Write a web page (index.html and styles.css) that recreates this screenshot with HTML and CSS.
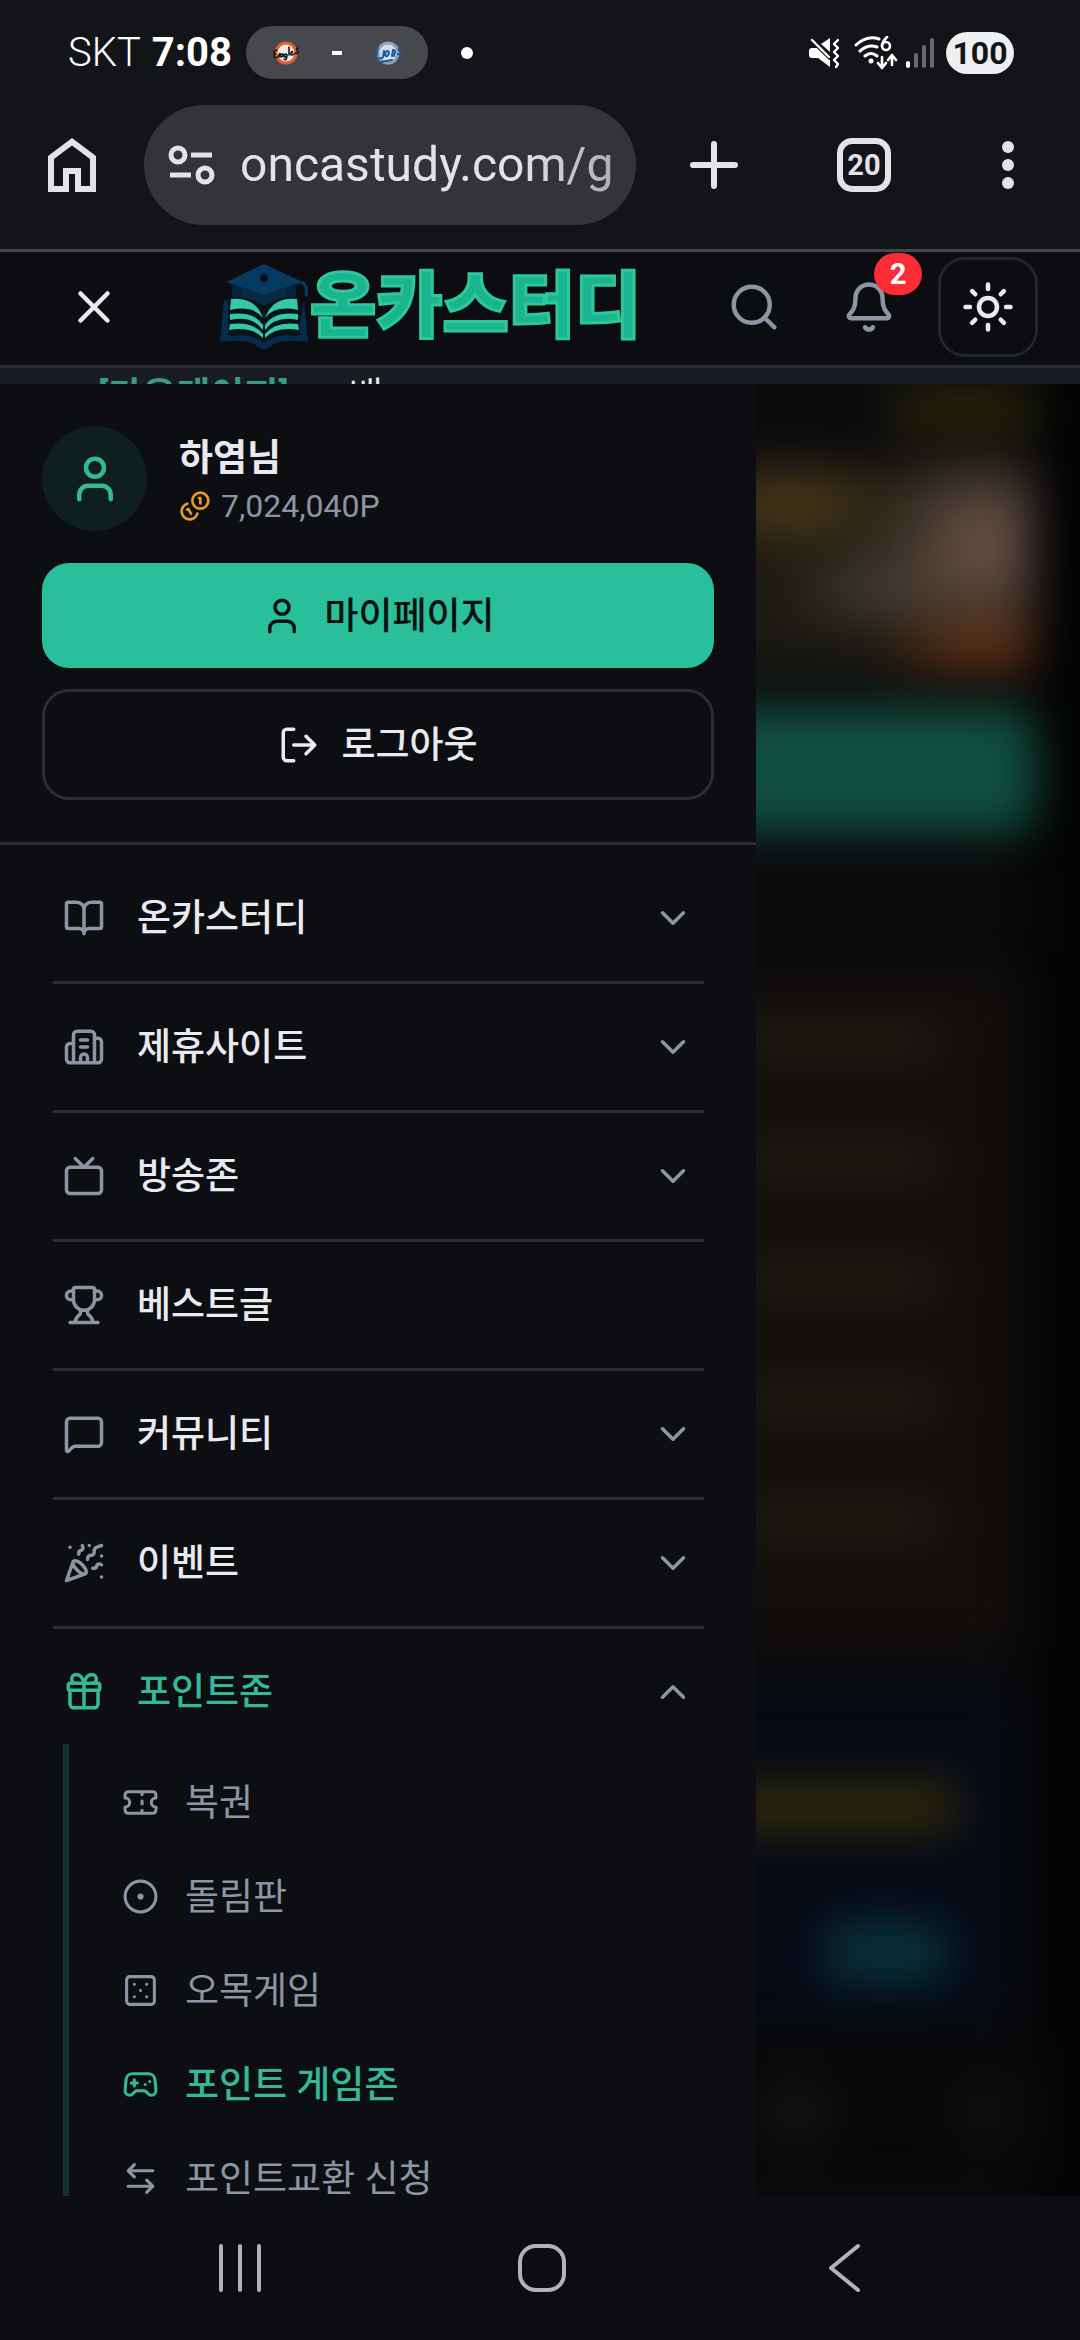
FILE: index.html
```html
<!DOCTYPE html>
<html lang="ko">
<head>
<meta charset="utf-8">
<meta name="viewport" content="width=device-width, initial-scale=1">
<title>온카스터디</title>
<link rel="stylesheet" href="styles.css">
</head>
<body>
<svg class="sprite" aria-hidden="true">
  <symbol id="user" viewBox="0 0 24 24"><path d="M19 21v-2a4 4 0 0 0-4-4H9a4 4 0 0 0-4 4v2"/><circle cx="12" cy="7" r="4"/></symbol>
  <symbol id="close" viewBox="0 0 24 24"><path d="M18 6 6 18M6 6l12 12"/></symbol>
  <symbol id="search" viewBox="0 0 24 24"><path d="m21 21-4.34-4.34"/><circle cx="11" cy="11" r="8"/></symbol>
  <symbol id="bell" viewBox="0 0 24 24"><path d="M10.268 21a2 2 0 0 0 3.464 0M3.262 15.326A1 1 0 0 0 4 17h16a1 1 0 0 0 .74-1.673C19.41 13.956 18 12.499 18 8A6 6 0 0 0 6 8c0 4.499-1.411 5.956-2.738 7.326"/></symbol>
  <symbol id="sun" viewBox="0 0 24 24"><circle cx="12" cy="12" r="4"/><path d="M12 2v2M12 20v2m-7.07-17.07 1.41 1.41m11.32 11.32 1.41 1.41M2 12h2M20 12h2M6.34 17.66l-1.41 1.41M19.07 4.93l-1.41 1.41"/></symbol>
  <symbol id="coins" viewBox="0 0 24 24"><path d="M13.744 17.736a6 6 0 1 1-7.48-7.48M15 6h1v4M6.134 14.768l.866-.5 2 3.464"/><circle cx="16" cy="8" r="6"/></symbol>
  <symbol id="logout" viewBox="0 0 24 24"><path d="m16 17 5-5-5-5M21 12H9M9 21H5a2 2 0 0 1-2-2V5a2 2 0 0 1 2-2h4"/></symbol>
  <symbol id="down" viewBox="0 0 24 24"><path d="m6 9 6 6 6-6"/></symbol>
  <symbol id="up" viewBox="0 0 24 24"><path d="m18 15-6-6-6 6"/></symbol>
  <symbol id="book" viewBox="0 0 24 24"><path d="M12 7v14M3 18a1 1 0 0 1-1-1V4a1 1 0 0 1 1-1h5a4 4 0 0 1 4 4 4 4 0 0 1 4-4h5a1 1 0 0 1 1 1v13a1 1 0 0 1-1 1h-6a3 3 0 0 0-3 3 3 3 0 0 0-3-3z"/></symbol>
  <symbol id="building" viewBox="0 0 24 24"><path d="M10 12h4M10 8h4M14 21v-3a2 2 0 0 0-4 0v3M6 10H4a2 2 0 0 0-2 2v7a2 2 0 0 0 2 2h16a2 2 0 0 0 2-2V9a2 2 0 0 0-2-2h-2M6 21V5a2 2 0 0 1 2-2h8a2 2 0 0 1 2 2v16"/></symbol>
  <symbol id="tv" viewBox="0 0 24 24"><path d="m17 2-5 5-5-5"/><rect width="20" height="15" x="2" y="7" rx="2"/></symbol>
  <symbol id="trophy" viewBox="0 0 24 24"><path d="M10 14.66v1.626a2 2 0 0 1-.976 1.696A5 5 0 0 0 7 21.978M14 14.66v1.626a2 2 0 0 0 .976 1.696A5 5 0 0 1 17 21.978M18 9h1.5a1 1 0 0 0 0-5H18M4 22h16M6 9a6 6 0 0 0 12 0V3a1 1 0 0 0-1-1H7a1 1 0 0 0-1 1zM6 9H4.5a1 1 0 0 1 0-5H6"/></symbol>
  <symbol id="message" viewBox="0 0 24 24"><path d="M22 17a2 2 0 0 1-2 2H6.828a2 2 0 0 0-1.414.586l-2.202 2.202A.71.71 0 0 1 2 21.286V5a2 2 0 0 1 2-2h16a2 2 0 0 1 2 2z"/></symbol>
  <symbol id="party" viewBox="0 0 24 24"><path d="M5.8 11.3 2 22l10.7-3.79M4 3h.01M22 8h.01M15 2h.01M22 20h.01M22 2l-2.24.75a2.9 2.9 0 0 0-1.96 3.12c.1.86-.57 1.63-1.45 1.63h-.38c-.86 0-1.6.6-1.76 1.44L14 10M22 13l-.82-.33c-.86-.34-1.82.2-1.98 1.11-.11.7-.72 1.22-1.43 1.22H17M11 2l.33.82c.34.86-.2 1.82-1.11 1.98C9.52 4.9 9 5.52 9 6.23V7M11 13c1.93 1.93 2.83 4.17 2 5-.83.83-3.07-.07-5-2-1.93-1.93-2.83-4.17-2-5 .83-.83 3.07.07 5 2Z"/></symbol>
  <symbol id="gift" viewBox="0 0 24 24"><path d="M12 7v14M20 11v8a2 2 0 0 1-2 2H6a2 2 0 0 1-2-2v-8M7.5 7a1 1 0 0 1 0-5A4.8 8 0 0 1 12 7a4.8 8 0 0 1 4.5-5 1 1 0 0 1 0 5"/><rect x="3" y="7" width="18" height="4" rx="1"/></symbol>
  <symbol id="ticket" viewBox="0 0 24 24"><path d="M2 9a3 3 0 0 1 0 6v2a2 2 0 0 0 2 2h16a2 2 0 0 0 2-2v-2a3 3 0 0 1 0-6V7a2 2 0 0 0-2-2H4a2 2 0 0 0-2 2ZM13 5v2M13 17v2M13 11v2"/></symbol>
  <symbol id="wheel" viewBox="0 0 24 24"><circle cx="12" cy="12" r="10"/><circle cx="12" cy="12" r="1"/></symbol>
  <symbol id="dice" viewBox="0 0 24 24"><rect width="18" height="18" x="3" y="3" rx="2"/><path d="M16 8h.01M8 8h.01M8 16h.01M16 16h.01M12 12h.01"/></symbol>
  <symbol id="gamepad" viewBox="0 0 24 24"><path d="M6 11h4M8 9v4M15 12h.01M18 10h.01M17.32 5H6.68a4 4 0 0 0-3.978 3.59c-.006.052-.01.101-.017.152C2.604 9.416 2 14.456 2 16a3 3 0 0 0 3 3c1 0 1.5-.5 2-1l1.414-1.414A2 2 0 0 1 9.828 16h4.344a2 2 0 0 1 1.414.586L17 18c.5.5 1 1 2 1a3 3 0 0 0 3-3c0-1.545-.604-6.584-.685-7.258-.007-.05-.011-.1-.017-.151A4 4 0 0 0 17.32 5z"/></symbol>
  <symbol id="exchange" viewBox="0 0 24 24"><path d="M8 3 4 7l4 4M4 7h16M16 21l4-4-4-4M20 17H4"/></symbol>
</svg>

<div class="status">
  <div class="status-left">
    <span class="carrier">SKT</span>
    <span class="clock">7:08</span>
    <div class="score">
      <svg class="team" viewBox="0 0 28 24"><circle cx="14" cy="12" r="10" fill="#f0e9e4" stroke="#d9622f" stroke-width="3"/><path d="M5 9c-4 1-4 4-1 4-3 1-2 5 2 3l2-4v4m2-3c-3 1-1 4 1 2v-2m3 0c-3 0-2 4 0 3l1-3c0 5-1 7-3 5M17 6v8m2-2c3-1 1-3 0 0s2 2 3 1m4-6c-3 1-1 3 0 4s-2 2-3 1" fill="none" stroke="#17181c" stroke-width="1.6" stroke-linecap="round"/></svg>
      <span class="dash"></span>
      <svg class="team" viewBox="0 0 28 24"><circle cx="14" cy="12" r="10" fill="#d6dde4" stroke="#8fa3b8" stroke-width="3"/><path d="M4 6 2 18l6-1M10 10l-1 6M13 10c-3 2-2 6 0 5s3-5 0-5M18 15l1-6c3 0 2 3 1 6M27 6c-3 1-3 3-1 4s0 4-2 3M7 21l11-2" fill="none" stroke="#1b5aa0" stroke-width="2" stroke-linecap="round"/></svg>
    </div>
    <span class="dot"></span>
  </div>
  <div class="status-right">
    <svg class="mute" viewBox="0 0 30 30"><path d="M3 10h5l13 12v7L9 20H3q-3 0-3-3v-4q0-3 3-3ZM12 6l9-6v14Z" fill="#fff"/><path d="m3 3 18 18" stroke="#131418" stroke-width="3"/><path d="m3 2 17 17M29 2l-4 4 4 4-4 4 4 4-4 4 4 4-2 3" fill="none" stroke="#fff" stroke-width="2.4" stroke-linecap="round" stroke-linejoin="round"/></svg>
    <svg class="wifi" viewBox="0 0 44 34"><path d="M2 9Q13-1 25 3M6 15q8-7 17-4M11 20q6-5 12 0" fill="none" stroke="#fff" stroke-width="3" stroke-linecap="round"/><circle cx="17" cy="25" r="2.5" fill="#fff"/><path d="M33 1q-5 5-5 9M28 31V21m-4 6 4 5 4-5M38 29V19m-4 5 4-5 4 5" fill="none" stroke="#fff" stroke-width="2.6" stroke-linecap="round" stroke-linejoin="round"/><circle cx="32" cy="10" r="4" fill="none" stroke="#fff" stroke-width="2.6"/></svg>
    <svg class="signal" viewBox="0 0 28 30"><path d="M2 25v3" stroke="#fff" stroke-width="4" stroke-linecap="round"/><path d="M10 17v11M18 9v19M26 2v26" stroke="#67686c" stroke-width="4" stroke-linecap="round"/></svg>
    <span class="battery">100</span>
  </div>
</div>

<div class="toolbar">
  <button class="tool" aria-label="홈"><svg viewBox="0 0 24 24"><path d="M6 19h3v-6h6v6h3v-9l-6-4.5L6 10v9ZM4 21V9l8-6 8 6v12h-7v-6h-2v6H4Z"/></svg></button>
  <label class="omnibox">
    <svg viewBox="0 0 48 40"><g fill="none" stroke="#e2e3e9" stroke-width="5"><circle cx="10" cy="10" r="7"/><path d="M23 10h21M2 30h21"/><circle cx="37" cy="30" r="7"/></g></svg>
    <input type="text" value="oncastudy.com/ga" aria-label="주소" readonly>
  </label>
  <button class="tool plus" aria-label="새 탭"><svg viewBox="0 0 24 24"><path d="M12 5v14M5 12h14" stroke="#e2e3e9" stroke-width="2" stroke-linecap="round"/></svg></button>
  <button class="tool" aria-label="탭"><span class="tabs">20</span></button>
  <button class="tool kebab" aria-label="더보기"><svg viewBox="2 0 20 24"><circle cx="12" cy="6" r="2"/><circle cx="12" cy="12" r="2"/><circle cx="12" cy="18" r="2"/></svg></button>
</div>

<header class="header">
  <button class="hbtn bright" aria-label="메뉴 닫기"><svg class="icon"><use href="#close"/></svg></button>
  <a class="logo" href="#">
    <svg viewBox="0 0 88 86">
      <path d="m44 1 40 17-8 4v18H12V22L8 18Z" fill="#04223a"/>
      <path d="M44 0 82 18 44 31 6 18Z" fill="#063a60"/>
      <path d="M22 24v12q11-2 22 6 11-8 22-6V24L44 31Z" fill="#062a42"/>
      <path d="M82 18q6 4 4 14" fill="none" stroke="#063a60" stroke-width="3"/>
      <circle cx="44" cy="14" r="4" fill="#03131f"/>
      <path d="M4 36 0 78q30-4 38 5 6 4 12 0 8-9 38-5l-4-42-6 36q-24-4-34 7Q34 68 10 72V36Z" fill="#052c4c"/>
      <path d="M8 33q24-2 36 12 12-14 36-12v38q-24-2-36 8Q32 69 8 71Z" fill="#06141c"/>
      <g fill="#36c9a8"><path d="M11 35q24-3 32 19Q33 41 10 46ZM10 50q24-3 33 11v5Q32 51 10 56ZM10 60q23-3 33 10v4Q32 62 9 66ZM77 35q-24-3-32 19 10-13 33-8ZM78 50q-24-3-33 11v5q11-15 33-10ZM78 60q-23-3-33 10v4q11-12 34-8Z"/></g>
    </svg>
    <span>온카스터디</span>
  </a>
  <button class="hbtn" aria-label="검색"><svg class="icon"><use href="#search"/></svg></button>
  <button class="hbtn" aria-label="알림"><svg class="icon"><use href="#bell"/></svg><span class="badge">2</span></button>
  <button class="hbtn bright theme" aria-label="테마"><svg class="icon"><use href="#sun"/></svg></button>
</header>

<div class="ticker"><b>[가온게이지]</b><span>배</span></div>

<div class="main">
  <aside class="sidebar">
    <section class="account">
      <div class="profile">
        <div class="avatar"><svg class="icon"><use href="#user"/></svg></div>
        <div>
          <div class="name">하염님</div>
          <div class="points"><svg class="icon coin"><use href="#coins"/></svg>7,024,040P</div>
        </div>
      </div>
      <button class="btn primary"><svg class="icon mid"><use href="#user"/></svg><span>마이페이지</span></button>
      <button class="btn outline"><svg class="icon mid"><use href="#logout"/></svg><span>로그아웃</span></button>
    </section>
    <nav>
      <ul class="menu">
        <li><button><svg class="icon mid"><use href="#book"/></svg><span>온카스터디</span><svg class="icon mid"><use href="#down"/></svg></button></li>
        <li><button><svg class="icon mid"><use href="#building"/></svg><span>제휴사이트</span><svg class="icon mid"><use href="#down"/></svg></button></li>
        <li><button><svg class="icon mid"><use href="#tv"/></svg><span>방송존</span><svg class="icon mid"><use href="#down"/></svg></button></li>
        <li><button><svg class="icon mid"><use href="#trophy"/></svg><span>베스트글</span></button></li>
        <li><button><svg class="icon mid"><use href="#message"/></svg><span>커뮤니티</span><svg class="icon mid"><use href="#down"/></svg></button></li>
        <li><button><svg class="icon mid"><use href="#party"/></svg><span>이벤트</span><svg class="icon mid"><use href="#down"/></svg></button></li>
        <li><button aria-expanded="true"><svg class="icon mid green"><use href="#gift"/></svg><span class="green">포인트존</span><svg class="icon mid"><use href="#up"/></svg></button>
          <ul class="submenu">
            <li><a href="#"><svg class="icon small"><use href="#ticket"/></svg><span>복권</span></a></li>
            <li><a href="#"><svg class="icon small"><use href="#wheel"/></svg><span>돌림판</span></a></li>
            <li><a href="#"><svg class="icon small"><use href="#dice"/></svg><span>오목게임</span></a></li>
            <li><a href="#" class="green current"><svg class="icon small"><use href="#gamepad"/></svg><span>포인트 게임존</span></a></li>
            <li><a href="#"><svg class="icon small"><use href="#exchange"/></svg><span>포인트교환 신청</span></a></li>
          </ul>
        </li>
      </ul>
    </nav>
  </aside>
  <div class="backdrop" aria-hidden="true">
    <div class="behind">
      <div class="chip"></div>
      <div class="banner"></div>
      <div class="cta"></div>
      <div class="list"><i></i><i></i><i></i><i></i><i></i></div>
      <div class="card"><i class="yellow"></i><i class="cyan"></i></div>
      <div class="spots"></div>
    </div>
  </div>
</div>

<div class="navbar">
  <button aria-label="최근 앱"><svg viewBox="0 0 54 54"><path d="M6 5v44M25 5v44M44 5v44"/></svg></button>
  <button aria-label="홈"><svg viewBox="0 0 54 54"><rect x="5" y="5" width="44" height="44" rx="16"/></svg></button>
  <button aria-label="뒤로"><svg viewBox="0 0 54 54"><path d="M43 5 16 27l27 22"/></svg></button>
</div>
</body>
</html>
```
FILE: styles.css
```css
* { box-sizing: border-box; }

body {
  margin: 0;
  height: 100vh;
  display: flex;
  flex-direction: column;
  overflow: hidden;
  background: #0c0d11;
  color: #e9eaf0;
  font-family: Roboto, "Noto Sans CJK KR", sans-serif;
}

button {
  border: 0;
  padding: 0;
  background: none;
  color: inherit;
  font: inherit;
}

a { color: inherit; text-decoration: none; }
ul { list-style: none; margin: 0; padding: 0; }
svg { display: block; flex: none; }
.sprite { width: 0; height: 0; }

.icon {
  width: 54px;
  height: 54px;
  fill: none;
  stroke: currentColor;
  stroke-width: 2;
  stroke-linecap: round;
  stroke-linejoin: round;
}
.icon.mid { width: 42px; height: 42px; }
.icon.small { width: 37px; height: 37px; }
.icon.coin { width: 32px; height: 32px; color: #e79a26; }

/* Status bar */
.status {
  flex: none;
  height: 105px;
  padding: 0 66px 0 68px;
  display: flex;
  align-items: center;
  justify-content: space-between;
  background: #131418;
  color: #fff;
  font-size: 40px;
}
.status-left, .status-right { display: flex; align-items: center; }
.carrier { font-weight: 300; }
.clock { margin-left: 11px; font-weight: 700; }
.score {
  width: 182px;
  height: 53px;
  margin: 0 33px 0 14px;
  padding: 0 26px;
  display: flex;
  align-items: center;
  justify-content: space-between;
  border-radius: 27px;
  background: #47484b;
}
.team { width: 28px; height: 24px; }
.dash { width: 10px; height: 4px; background: #fff; }
.dot { width: 12px; height: 12px; border-radius: 50%; background: #fff; }
.mute { width: 30px; height: 30px; }
.wifi { width: 44px; height: 34px; margin: 0 8px 0 15px; }
.signal { width: 28px; height: 30px; }
.battery {
  width: 68px;
  height: 42px;
  margin-left: 12px;
  border-radius: 21px;
  background: #eeeff0;
  color: #131418;
  font-size: 32px;
  font-weight: 700;
  line-height: 42px;
  text-align: center;
}

/* Browser toolbar */
.toolbar {
  flex: none;
  height: 147px;
  padding: 0 42px 24px 36px;
  display: flex;
  align-items: center;
  border-bottom: 3px solid #454650;
  background: #131418;
  fill: #e2e3e9;
}
.tool { width: 72px; height: 72px; display: grid; place-items: center; }
.tool svg { width: 72px; height: 72px; }
.omnibox {
  flex: 1;
  min-width: 0;
  height: 120px;
  margin: 0 42px 0 36px;
  padding: 0 24px;
  display: flex;
  align-items: center;
  gap: 24px;
  border-radius: 60px;
  background: #333439;
}
.omnibox svg { width: 48px; height: 40px; }
.omnibox input {
  flex: 1;
  min-width: 0;
  padding: 0;
  border: 0;
  outline: 0;
  background: none;
  color: #e2e3e9;
  font: 48px/60px Roboto, sans-serif;
  -webkit-mask-image: linear-gradient(to right, #000 75%, rgba(0, 0, 0, .7));
  mask-image: linear-gradient(to right, #000 75%, rgba(0, 0, 0, .7));
}
.plus { margin-right: 78px; }
.kebab { width: 60px; margin-left: 78px; }
.kebab svg { width: 60px; }
.tabs {
  width: 54px;
  height: 54px;
  border: 6px solid #e2e3e9;
  border-radius: 15px;
  color: #e2e3e9;
  font-size: 29px;
  font-weight: 700;
  line-height: 42px;
  text-align: center;
}

/* Site header */
.header {
  flex: none;
  height: 116px;
  padding: 0 42px 3px 48px;
  display: flex;
  align-items: center;
  gap: 23px;
  border-bottom: 3px solid #2b2d36;
  background: #0c0d11;
}
.hbtn {
  position: relative;
  width: 92px;
  height: 92px;
  display: grid;
  place-items: center;
  color: #8d95a3;
}
.hbtn.bright { color: #e9eaf0; }
.hbtn.theme { width: 100px; height: 100px; border: 3px solid #23252c; border-radius: 27px; }
.badge {
  position: absolute;
  top: -8px;
  right: -7px;
  width: 48px;
  height: 42px;
  border-radius: 21px;
  background: #fb2c36;
  color: #fff;
  font-size: 29px;
  font-weight: 700;
  line-height: 42px;
  text-align: center;
}
.logo {
  flex: 1;
  padding-left: 57px;
  display: flex;
  align-items: center;
  gap: 2px;
  color: #1ab58e;
  font-size: 72px;
  font-weight: 900;
  line-height: 88px;
  -webkit-text-stroke: 3px #2cc79a;
  white-space: nowrap;
}
.logo svg { width: 88px; height: 86px; }

.ticker {
  flex: none;
  height: 16px;
  padding: 8px 98px 0;
  display: flex;
  gap: 60px;
  overflow: hidden;
  background: #191c23;
  font-size: 37px;
  line-height: 42px;
}
.ticker b { color: #3a9b80; font-weight: 700; }

.main { flex: 1; min-height: 0; display: flex; }

/* Slide-out menu */
.sidebar {
  width: 70%;
  overflow: hidden;
  background: #0c0e12;
  font-size: 37px;
  font-weight: 500;
}
.account {
  padding: 42px;
  display: flex;
  flex-direction: column;
  border-bottom: 3px solid #2b2d36;
}
.profile { display: flex; align-items: center; gap: 32px; margin-bottom: 32px; }
.avatar {
  width: 105px;
  height: 105px;
  display: grid;
  place-items: center;
  border-radius: 50%;
  background: #0f1f1d;
  color: #34b896;
}
.name { font-weight: 700; line-height: 54px; }
.points {
  display: flex;
  align-items: center;
  gap: 10px;
  color: #8d95a3;
  font-size: 32px;
  font-weight: 400;
  line-height: 40px;
}
.btn {
  height: 105px;
  display: flex;
  align-items: center;
  justify-content: center;
  gap: 21px;
  border-radius: 27px;
  font-weight: 500;
}
.btn.primary { background: #28bf9a; color: #06120f; }
.btn.outline { height: 111px; margin-top: 21px; border: 3px solid #2b2d36; }
.btn span, .menu span { padding-bottom: 5px; }

.menu { padding: 10px 52px 0 53px; }
.menu > li { padding: 10px 0 11px; border-bottom: 3px solid #2b2d36; }
.menu button {
  width: 100%;
  height: 105px;
  padding: 0 10px;
  display: flex;
  align-items: center;
  gap: 32px;
  color: #8d95a3;
}
.menu button span { flex: 1; color: #e9eaf0; text-align: left; }
.menu .green, .menu button .green { color: #34b896; }
.submenu {
  margin-left: 10px;
  padding: 11px 0 11px 53px;
  border-left: 6px solid #14332d;
}
.submenu a {
  height: 94px;
  display: flex;
  align-items: center;
  gap: 26px;
  color: #8d95a3;
  font-weight: 400;
}
.submenu a.current { font-weight: 500; }

/* Dimmed, blurred page behind the menu */
.backdrop {
  flex: 1;
  overflow: hidden;
  background: linear-gradient(to right, #0b0b0d 70%, #040405 96%);
}
.behind { margin-left: -80px; padding-right: 46px; filter: blur(22px); }
.chip { width: 140px; height: 52px; margin-left: auto; background: #242109; }
.banner {
  height: 210px;
  margin-top: 26px;
  background:
    radial-gradient(120px 50px at 86% 90%, #6a3010, transparent),
    radial-gradient(120px 120px at 86% 40%, #70584e, transparent),
    radial-gradient(100px 50px at 56% 60%, #463e35, transparent),
    radial-gradient(130px 50px at 32% 20%, #523e18, transparent),
    #1c1a13;
}
.cta { height: 124px; margin-top: 36px; border-radius: 24px; background: #104f3e; }
.list {
  height: 670px;
  margin: 144px 20px 0 0;
  padding: 44px 0 0 60px;
  background: #120e0b;
}
.list i { display: block; width: 200px; height: 40px; margin-bottom: 80px; background: #1f1c14; }
.card {
  height: 340px;
  margin: 40px 20px 0 0;
  padding: 96px 0 0 40px;
  background: #060a15;
}
.card i { display: block; }
.yellow { width: 240px; height: 50px; background: #2d280b; }
.cyan { width: 120px; height: 60px; margin: 90px 0 0 110px; background: #07323a; }
.spots {
  height: 130px;
  margin-top: 20px;
  background: radial-gradient(60px 60px at 120px 50%, #161618, transparent), radial-gradient(60px 60px at 310px 50%, #111113, transparent), #080707;
}

/* Android navigation bar */
.navbar {
  flex: none;
  height: 144px;
  padding: 0 88px 0 92px;
  display: grid;
  grid-template-columns: repeat(3, 1fr);
  align-items: center;
}
.navbar button { display: grid; place-items: center; }
.navbar svg {
  width: 54px;
  height: 54px;
  fill: none;
  stroke: #b3b3b5;
  stroke-width: 4;
  stroke-linecap: round;
  stroke-linejoin: round;
}
```
